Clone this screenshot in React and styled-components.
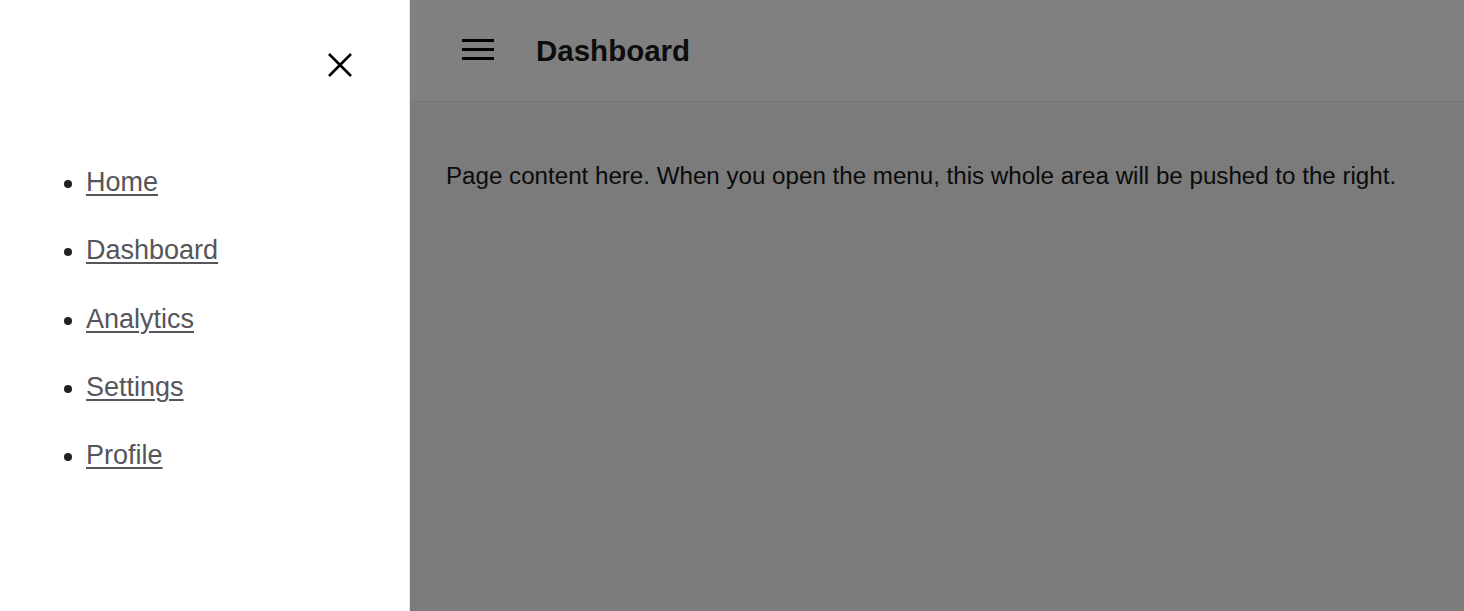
import React from "react";
import styled, { createGlobalStyle } from "styled-components";

const Global = createGlobalStyle`
  html, body { margin: 0; padding: 0; height: 100%; }
  body { font-family: "Liberation Sans", Arial, sans-serif; background: #7a7b7a; }
  #root { height: 100%; }
`;

const Shell = styled.div`
  display: flex;
  width: 100%;
  height: 100vh;
  overflow: hidden;
`;

const Sidebar = styled.aside`
  flex: 0 0 409px;
  background: #ffffff;
  border-right: 1px solid #e4e4e4;
  display: flex;
  flex-direction: column;
`;

const SidebarTop = styled.div`
  display: flex;
  justify-content: flex-end;
  padding: 53px 57px 0 0;
`;

const CloseButton = styled.button`
  width: 24px;
  height: 24px;
  padding: 0;
  border: none;
  background: transparent;
  display: flex;
  cursor: pointer;
`;

const NavList = styled.ul`
  margin: 90px 0 0;
  padding: 0 0 0 86px;
  list-style: disc;
  color: #222;
`;

const NavItem = styled.li`
  font-size: 27px;
  line-height: 31px;
  margin-bottom: 37.3px;
  &::marker { font-size: 25px; }
`;

const NavLink = styled.a`
  color: #55555a;
  text-decoration: underline;
  text-decoration-thickness: 2px;
  text-underline-offset: 3px;
  cursor: pointer;
`;

const Main = styled.main`
  flex: 1;
  display: flex;
  flex-direction: column;
  background: #7a7b7a;
`;

const Header = styled.header`
  height: 101px;
  flex: 0 0 101px;
  background: #808080;
  border-bottom: 1px solid #757675;
  display: flex;
  align-items: center;
  padding-left: 52px;
  gap: 42px;
`;

const MenuButton = styled.button`
  width: 32px;
  height: 24px;
  padding: 0;
  border: none;
  background: transparent;
  display: flex;
  margin-top: -2px;
`;

const Title = styled.h1`
  margin: 0;
  font-size: 29.5px;
  font-weight: 700;
  color: #0d0d0d;
`;

const Content = styled.section`
  padding: 60px 36px 0;
`;

const Text = styled.p`
  margin: 0;
  font-size: 24.15px;
  color: #0b0b0b;
`;

const links = ["Home", "Dashboard", "Analytics", "Settings", "Profile"];

export default function App() {
  return (
    <>
      <Global />
      <Shell>
        <Sidebar>
          <SidebarTop>
            <CloseButton aria-label="Close menu">
              <svg width="24" height="24" viewBox="0 0 24 24">
                <path d="M1 1 L23 23 M23 1 L1 23" stroke="#000" strokeWidth="2.6" fill="none" />
              </svg>
            </CloseButton>
          </SidebarTop>
          <NavList>
            {links.map((l) => (
              <NavItem key={l}>
                <NavLink href="#">{l}</NavLink>
              </NavItem>
            ))}
          </NavList>
        </Sidebar>
        <Main>
          <Header>
            <MenuButton aria-label="Open menu">
              <svg width="32" height="24" viewBox="0 0 32 24">
                <rect x="0" y="1" width="32" height="3" fill="#000" />
                <rect x="0" y="10" width="32" height="3" fill="#000" />
                <rect x="0" y="19" width="32" height="3" fill="#000" />
              </svg>
            </MenuButton>
            <Title>Dashboard</Title>
          </Header>
          <Content>
            <Text>
              Page content here. When you open the menu, this whole area will be pushed to the right.
            </Text>
          </Content>
        </Main>
      </Shell>
    </>
  );
}
